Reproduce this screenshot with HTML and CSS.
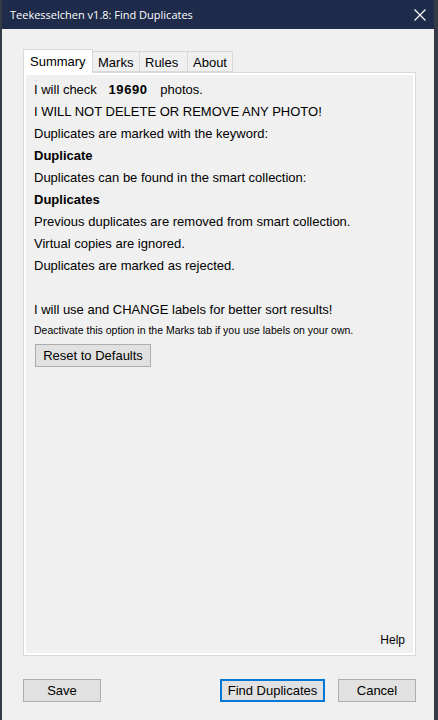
FILE: index.html
```html
<!DOCTYPE html>
<html lang="en">
<head>
    <meta charset="UTF-8">
    <meta name="viewport" content="width=device-width, initial-scale=1.0">
    <title>Teekesselchen v1.8: Find Duplicates</title>
    <link rel="stylesheet" href="styles.css">
</head>
<body>
    <div class="window">
        <div class="titlebar">
            <span class="title">Teekesselchen v1.8: Find Duplicates</span>
            <svg class="close" width="12" height="12" viewBox="0 0 12 12">
                <path d="M0.5 0.5 L11.5 11.5 M11.5 0.5 L0.5 11.5" stroke="#fff" stroke-width="1.2" fill="none"/>
            </svg>
        </div>
        <div class="dialog">
            <div class="tabs">
                <div class="tab active">Summary</div>
                <div class="tab tab-marks">Marks</div>
                <div class="tab tab-rules">Rules</div>
                <div class="tab tab-about">About</div>
            </div>
            <div class="panel">
                <div class="page">
                    <p>I will check <strong class="count">19690</strong> photos.</p>
                    <p>I WILL NOT DELETE OR REMOVE ANY PHOTO!</p>
                    <p>Duplicates are marked with the keyword:</p>
                    <p><strong>Duplicate</strong></p>
                    <p>Duplicates can be found in the smart collection:</p>
                    <p><strong>Duplicates</strong></p>
                    <p>Previous duplicates are removed from smart collection.</p>
                    <p>Virtual copies are ignored.</p>
                    <p>Duplicates are marked as rejected.</p>
                    <p>&nbsp;</p>
                    <p>I will use and CHANGE labels for better sort results!</p>
                    <p class="texto-pequeno">Deactivate this option in the Marks tab if you use labels on your own.</p>
                    <button class="btn btn-reset">Reset to Defaults</button>
                    <div class="help">Help</div>
                </div>
            </div>
            <div class="actions">
                <button class="btn">Save</button>
                <div class="actions-right">
                    <button class="btn btn-find">Find Duplicates</button>
                    <button class="btn">Cancel</button>
                </div>
            </div>
        </div>
    </div>
</body>
</html>
```

FILE: styles.css
```css
body {
    margin: 0;
    padding: 0;
    background-color: #343b44;
    font-family: "Liberation Sans", Arial, sans-serif;
    color: #000;
    height: 720px;
    overflow: hidden;
}
.window {
    margin-left: 2px;
    width: 432px;
    height: 720px;
    background-color: #f0f0f0;
    display: flex;
    flex-direction: column;
}
.titlebar {
    height: 29px;
    background-color: #1e2b4a;
    color: #fff;
    display: flex;
    align-items: center;
    justify-content: space-between;
    padding: 0 8px 0 8px;
    box-sizing: border-box;
}
.title {
    font-family: "Open Sans", sans-serif;
    font-size: 11px;
    padding-bottom: 1px;
}
.dialog {
    padding: 20px 18px 0 21px;
    display: flex;
    flex-direction: column;
}
.tabs {
    display: flex;
    align-items: flex-end;
    height: 23px;
    position: relative;
    z-index: 1;
}
.tab {
    height: 21px;
    box-sizing: border-box;
    border: 1px solid #d9d9d9;
    border-left: none;
    background-color: #f0f0f0;
    font-size: 13px;
    line-height: 19px;
    padding: 1px 5px 0 5px;
}
.tab.active {
    height: 24px;
    width: 70px;
    border-left: 1px solid #d9d9d9;
    border-bottom: none;
    background-color: #fff;
    padding: 2px 6px 0 6px;
    margin-bottom: -1px;
}
.tab-marks { width: 47px; }
.tab-rules { width: 48px; }
.tab-about { width: 45px; }
.panel {
    height: 584px;
    box-sizing: border-box;
    border: 1px solid #d9d9d9;
    background-color: #fff;
    padding: 2px;
}
.page {
    height: 100%;
    box-sizing: border-box;
    background-color: #f0f0f0;
    padding: 4px 8px 6px 8px;
    display: flex;
    flex-direction: column;
    align-items: flex-start;
}
.page p {
    margin: 0;
    font-size: 13px;
    line-height: 22px;
    white-space: nowrap;
}
.page strong {
    font-weight: bold;
}
.count {
    margin: 0 9px 0 8px;
    letter-spacing: 0.6px;
}
.page .texto-pequeno {
    font-size: 10.5px;
    line-height: 19px;
}
.btn {
    font-family: "Liberation Sans", Arial, sans-serif;
    font-size: 13px;
    color: #000;
    background-color: #e1e1e1;
    border: 1px solid #adadad;
    height: 23px;
    width: 78px;
    padding: 0;
    box-sizing: border-box;
}
.btn-reset {
    width: 116px;
    margin: 4px 0 0 1px;
}
.help {
    margin-top: auto;
    align-self: flex-end;
    font-size: 12px;
}
.actions {
    margin-top: 23px;
    display: flex;
    justify-content: space-between;
}
.actions-right {
    display: flex;
    gap: 13px;
}
.btn-find {
    width: 105px;
    border: 1px solid #0078d7;
    box-shadow: inset 0 0 0 1px #0078d7;
}
```
